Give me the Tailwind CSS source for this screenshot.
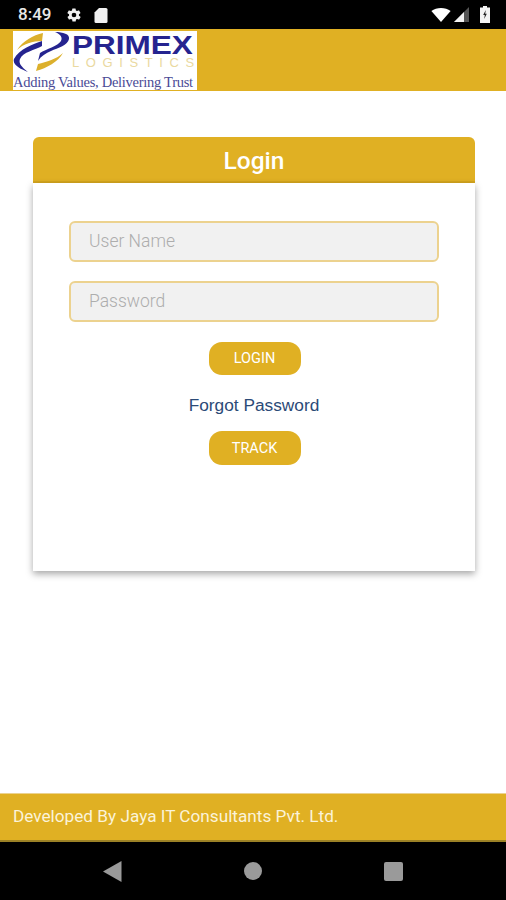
<!DOCTYPE html>
<html lang="en">
<head>
    <meta charset="UTF-8" />
    <meta name="viewport" content="width=device-width, initial-scale=1.0" />
    <title>Login</title>
    <script src="https://cdn.jsdelivr.net/npm/@tailwindcss/browser@4"></script>
</head>
<body class="bg-white font-['Roboto',sans-serif]">
    <div class="w-[506px] h-[900px] flex flex-col overflow-hidden">

        <!-- Status bar -->
        <div class="h-[29px] shrink-0 bg-black flex items-center justify-between pl-[18px] pr-[16px]">
            <div class="flex items-center">
                <span class="text-[17px] font-medium text-[#e8e8e8] w-[34px] leading-none">8:49</span>
                <svg class="ml-[14px]" width="16" height="16" viewBox="0 0 24 24" fill="#f0f0f0"><path d="M19.4 13a7.5 7.5 0 0 0 0-2l2.1-1.6a.5.5 0 0 0 .1-.6l-2-3.5a.5.5 0 0 0-.6-.2l-2.5 1a7.3 7.3 0 0 0-1.7-1l-.4-2.6a.5.5 0 0 0-.5-.4h-4a.5.5 0 0 0-.5.4l-.4 2.6a7.3 7.3 0 0 0-1.7 1l-2.5-1a.5.5 0 0 0-.6.2l-2 3.5a.5.5 0 0 0 .1.6L4.6 11a7.5 7.5 0 0 0 0 2l-2.1 1.6a.5.5 0 0 0-.1.6l2 3.5c.1.2.4.3.6.2l2.5-1c.5.4 1.1.7 1.7 1l.4 2.6c0 .2.3.4.5.4h4c.2 0 .5-.2.5-.4l.4-2.6c.6-.3 1.2-.6 1.7-1l2.5 1c.2.1.5 0 .6-.2l2-3.5a.5.5 0 0 0-.1-.6zM12 15.5a3.5 3.5 0 1 1 0-7 3.500 3.500 0 0 1 0 7z"/></svg>
                <svg class="ml-[12px]" width="14" height="16" viewBox="0 0 14 16" fill="#f0f0f0"><path d="M5 1h7a1.500 1.500 0 0 1 1.500 1.500v12A1.500 1.500 0 0 1 12 16H2a1.500 1.500 0 0 1-1.500-1.500V5.500z"/></svg>
            </div>
            <div class="flex items-center gap-[3px]">
                <svg width="20" height="14" viewBox="0 0 22 16"><path d="M0 3.500C3 1.200 7 0 11 0s8 1.200 11 3.500L11 16z" fill="#fff"/></svg>
                <svg width="15" height="15" viewBox="0 0 15 15"><path d="M15 0v15H0z" fill="#555"/><path d="M10 5v10H0z" fill="#f4f4f4"/></svg>
                <svg class="ml-[8px]" width="10" height="17" viewBox="0 0 10 17"><path d="M3 0h4v1.500h3V17H0V1.500h3z" fill="#f4f4f4"/><path d="M5.800 4 3.200 9h1.600l-.6 4 2.600-5.200H5.200z" fill="#222"/></svg>
            </div>
        </div>

        <!-- Header with logo -->
        <div class="h-[62px] shrink-0 bg-[#e0b023] pl-[13px] pt-[2px]">
            <div class="w-[184px] h-[59px] bg-white flex flex-col">
                <div class="h-[43px] flex">
                    <svg class="shrink-0" width="57" height="43" viewBox="0 0 57 43">
                        <path d="M4 19C10 10 20 4 30 2L29 10C20 10 10 13 4 19z" fill="#dcb02c"/>
                        <path d="M29 10C20 13 6 18 1 28C-1 34 8 38 15 41C10 37 5 33 7 28C10 21 22 19 29 15z" fill="#25248f"/>
                        <path d="M42 1C50 1 57 3 56 8C55 14 45 17 38 20C33 22 28 25 25 30L27 22C33 18 45 15 48 10C50 6 47 3 42 1z" fill="#25248f"/>
                        <path d="M23 40L25 33C33 31 44 28 50 22C45 31 34 37 23 40z" fill="#dcb02c"/>
                    </svg>
                    <div class="flex flex-col pl-[2px]">
                        <span class="h-[22px] text-[25px] leading-[22px] mt-[3px] font-bold font-['Liberation_Sans',sans-serif] text-[#25248f] whitespace-nowrap scale-x-[1.26] origin-left">PRIMEX</span>
                        <span class="h-[13px] text-[13px] leading-[13px] font-['Liberation_Sans',sans-serif] text-[#ead9a0] tracking-[6.6px] whitespace-nowrap">LOGISTICS</span>
                    </div>
                </div>
                <div class="text-[14.500px] leading-[16px] font-['Liberation_Serif',serif] text-[#4a4a96] tracking-[-0.27px] whitespace-nowrap">Adding Values, Delivering Trust</div>
            </div>
        </div>

        <!-- Main area -->
        <div class="flex-1 pl-[33px] pr-[31px] pt-[46px]">
            <div class="h-[46px] rounded-t-[6px] bg-[#e0b023] border-b-2 border-[#d4a51e] flex items-center justify-center text-white text-[24.500px] font-medium pt-[4px]">Login</div>
            <div class="h-[388px] bg-white px-[36px] pt-[38px] flex flex-col items-center shadow-[0_3px_7px_rgba(0,0,0,0.35)]">
                <input type="text" placeholder="User Name" class="w-[370px] h-[41px] shrink-0 rounded-[6px] border-2 border-[#ecd28f] bg-[#f1f1f1] px-[18px] pb-[2px] text-[17.500px] font-light outline-none placeholder:text-[#adadad]" />
                <input type="password" placeholder="Password" class="w-[370px] h-[41px] shrink-0 mt-[19px] rounded-[6px] border-2 border-[#ecd28f] bg-[#f1f1f1] px-[18px] pb-[2px] text-[17.500px] font-light outline-none placeholder:text-[#adadad]" />
                <button type="button" class="w-[92px] h-[33px] mt-[20px] ml-[1px] rounded-[13px] bg-[#e0b023] text-white text-[14.500px]">LOGIN</button>
                <a class="mt-[20px] h-[20px] leading-[20px] text-[17.300px] font-['Liberation_Sans',sans-serif] text-[#2b4a77]">Forgot Password</a>
                <button type="button" class="w-[92px] h-[34px] mt-[16px] ml-[1px] rounded-[13px] bg-[#e0b023] text-white text-[14.500px] pt-[1px]">TRACK</button>
            </div>
        </div>

        <!-- Footer -->
        <div class="h-[49px] shrink-0 bg-[#e0b023] border-t border-[#ecd28f] border-b-2 border-b-[#9c8226] pl-[13px] flex items-center text-[17.200px] text-[#fbf3d9]">Developed By Jaya IT Consultants Pvt. Ltd.</div>

        <!-- Nav bar -->
        <div class="h-[58px] shrink-0 bg-black relative flex items-center justify-center">
            <svg class="absolute left-[103px] top-[19px]" width="19" height="21" viewBox="0 0 19 21"><path d="M18.500 0v21L0 10.500z" fill="#9a9a9a"/></svg>
            <div class="w-[18px] h-[18px] rounded-full bg-[#9a9a9a]"></div>
            <div class="absolute left-[384px] top-[20px] w-[19px] h-[19px] rounded-[2px] bg-[#9a9a9a]"></div>
        </div>
    </div>
</body>
</html>
